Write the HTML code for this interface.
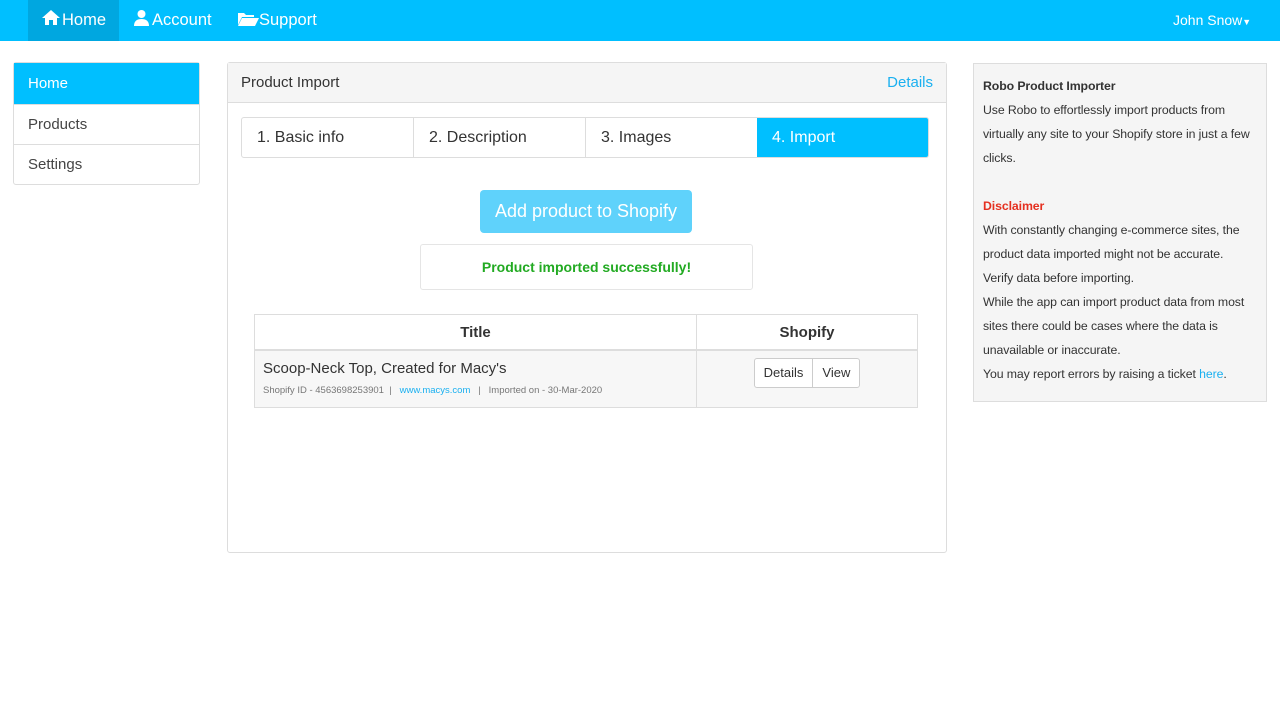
<!DOCTYPE html>
<html><head><style>
*{box-sizing:border-box;margin:0;padding:0}
body{width:1280px;height:720px;font-family:"Liberation Sans",sans-serif;color:#333;background:#fff;position:relative;overflow:hidden;font-size:14px}
.nav{position:absolute;left:0;top:0;width:1280px;height:41px;background:#00bfff}
.nav a{position:absolute;top:0;height:41px;line-height:41px;color:#fff;font-size:16.5px}
.abs{position:absolute}
.side{left:13px;top:62px;width:187px;border:1px solid #ddd;border-radius:3px}
.side div{height:40px;line-height:40px;padding-left:14px;border-top:1px solid #ddd;font-size:15px;color:#444}
.side div:first-child{background:#00bfff;color:#fff;border-top:0;height:41px;line-height:41px}
.panel{left:227px;top:62px;width:720px;height:491px;border:1px solid #ddd;border-radius:3px}
.ph{height:40px;background:#f5f5f5;border-bottom:1px solid #ddd;line-height:40px;padding:0 13px;font-size:15px}
.tabs{left:241px;top:117px;width:688px;height:41px;border:1px solid #ddd;border-radius:3px;display:flex;overflow:hidden}
.tabs div{flex:1;line-height:39px;padding-left:15px;font-size:16px;border-left:1px solid #ddd}
.tabs div:first-child{border-left:0}
.right{left:973px;top:63px;width:294px;height:339px;background:#f5f5f5;border:1px solid #ddd;font-size:12.3px;line-height:24px;padding:10px 8px 10px 9px;letter-spacing:-0.1px}
</style></head><body>
<div class="nav">
<div class="abs" style="left:28px;top:0;width:91px;height:41px;background:#00a7e0"></div>
<a style="left:41px"><svg width="20" height="17" viewBox="0 0 20 17" style="vertical-align:-1px;margin-right:1px"><path d="M10 1L1 9h3v7h4v-5h4v5h4V9h3z" fill="#fff"/></svg>Home</a>
<a style="left:133px"><svg width="17" height="17" viewBox="0 0 17 17" style="vertical-align:-1px;margin-right:2px"><circle cx="8.5" cy="5" r="4" fill="#fff"/><path d="M1 17c0-5 3-7 7.5-7S16 12 16 17z" fill="#fff"/></svg>Account</a>
<a style="left:237px"><svg width="22" height="15" viewBox="0 0 22 15" style="vertical-align:-1px"><path d="M1 2h6l2 2h8v2H5L1 14z" fill="#fff"/><path d="M5 7h17l-4 8H1z" fill="#fff"/></svg>Support</a>
<a style="left:1173px;font-size:14px">John Snow<span style="font-size:9px">▼</span></a>
</div>
<div class="abs side"><div>Home</div><div>Products</div><div>Settings</div></div>
<div class="abs panel"><div class="ph">Product Import<span style="float:right;color:#1ab0f0">Details</span></div></div>
<div class="abs tabs"><div>1. Basic info</div><div>2. Description</div><div>3. Images</div><div style="background:#00bfff;color:#fff;border-left:0">4. Import</div></div>
<div class="abs" style="left:480px;top:190px;width:212px;height:43px;background:#5fd2fb;border-radius:4px;color:#fff;font-size:18px;text-align:center;line-height:43px">Add product to Shopify</div>
<div class="abs" style="left:420px;top:244px;width:333px;height:46px;border:1px solid #e5e5e5;border-radius:3px;color:#22aa22;font-weight:bold;font-size:14px;text-align:center;line-height:44px">Product imported successfully!</div>
<div class="abs" style="left:254px;top:314px;width:664px;height:94px;border:1px solid #ddd">
<div style="height:36px;border-bottom:2px solid #ddd;display:flex;font-weight:bold;font-size:15px;line-height:36px"><div style="width:442px;text-align:center;border-right:1px solid #ddd">Title</div><div style="flex:1;text-align:center">Shopify</div></div>
<div style="display:flex;height:56px;background:#f7f7f7"><div style="width:442px;border-right:1px solid #ddd;padding:9px 8px"><div style="font-size:15px">Scoop-Neck Top, Created for Macy's</div><div style="font-size:9.5px;color:#777;margin-top:8px">Shopify ID - 4563698253901 &nbsp;| &nbsp;&nbsp;<span style="color:#1ab0f0">www.macys.com</span> &nbsp;&nbsp;| &nbsp;&nbsp;Imported on - 30-Mar-2020</div></div>
<div style="flex:1;padding-top:7px;text-align:center"><span style="display:inline-flex;border:1px solid #ccc;border-radius:3px;background:#fff;font-size:13px;height:30px;line-height:28px"><span style="padding:0 9px;border-right:1px solid #ccc">Details</span><span style="padding:0 9px">View</span></span></div></div>
</div>
<div class="abs right"><b>Robo Product Importer</b><br>Use Robo to effortlessly import products from virtually any site to your Shopify store in just a few clicks.<br><br><b style="color:#e53020">Disclaimer</b><br>With constantly changing e-commerce sites, the product data imported might not be accurate.<br>Verify data before importing.<br>While the app can import product data from most sites there could be cases where the data is unavailable or inaccurate.<br>You may report errors by raising a ticket <span style="color:#1ab0f0">here</span>.</div>
</body></html>
